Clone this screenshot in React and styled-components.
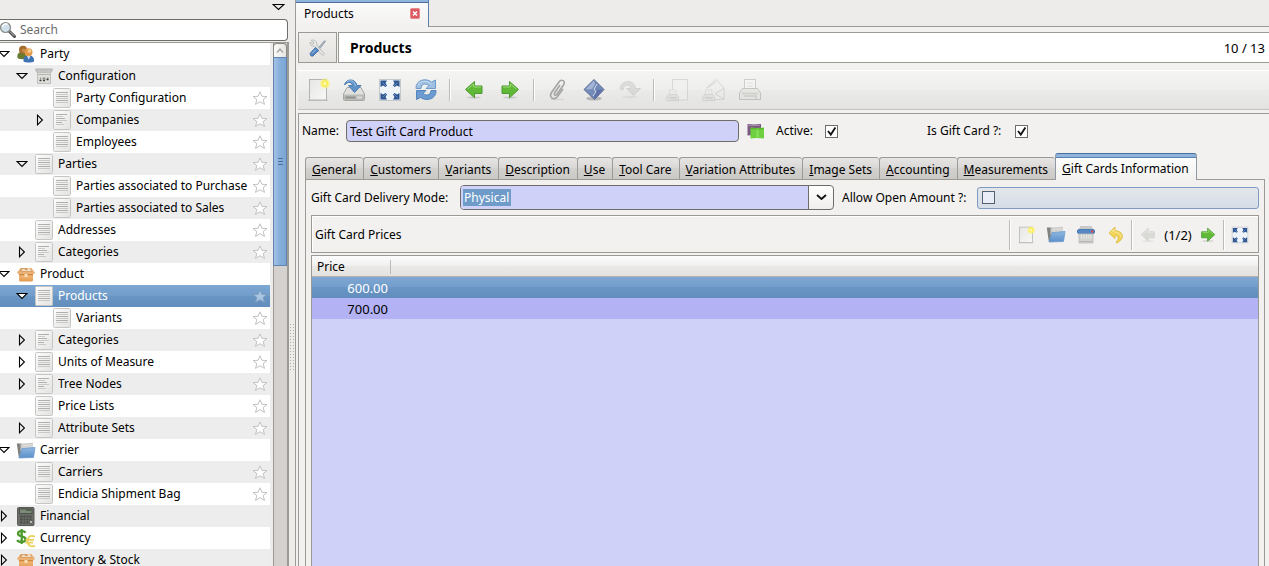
import React, { useId } from "react";
import styled, { createGlobalStyle, css } from "styled-components";

const Global = createGlobalStyle`
  *, *::before, *::after { box-sizing: border-box; }
  body { margin: 0; background: #edecea; overflow: hidden; }
  body, button, input, select, table {
    font-family: "Noto Sans", "Open Sans", sans-serif;
    font-size: 12px;
    line-height: 16px;
    color: #000;
  }
  button { border: 0; padding: 0; background: none; }
  svg { display: block; flex: none; }
`;

const selectedFill = "linear-gradient(#7fa7d3 0%, #719dca 50%, #6996c5 50%, #628dbc 100%)";

/* ---------- layout ---------- */
const Window = styled.div`
  display: flex;
  height: 100vh;
  overflow: hidden;
`;
const Sidebar = styled.aside`
  flex: none;
  width: 289px;
  display: flex;
  flex-direction: column;
`;
const SidebarHead = styled.header`
  height: 19px;
  padding: 3px 4px 0 0;
  display: flex;
  align-items: flex-start;
  justify-content: flex-end;
`;
const SearchBox = styled.label`
  display: flex;
  align-items: center;
  gap: 1px;
  height: 22px;
  margin-right: 1px;
  border: 1px solid #6f6d69;
  border-left: 0;
  border-radius: 0 4px 4px 0;
  background: #fff;
  input {
    flex: 1;
    min-width: 0;
    border: 0;
    padding: 0 2px;
    background: transparent;
    outline: 0;
  }
  input::placeholder { color: #6b6b6b; opacity: 1; }
`;
const TreeArea = styled.div`
  flex: 1;
  min-height: 0;
  margin-top: 1px;
  border-top: 1px solid #9c9a95;
  border-right: 2px solid #9c9a95;
  display: flex;
`;
const Tree = styled.ul`
  flex: 1;
  min-width: 0;
  margin: 0;
  padding: 0;
  list-style: none;
  overflow: hidden;
`;
const TreeRow = styled.li`
  display: flex;
  align-items: center;
  height: 22px;
  padding-left: ${(p) => p.$level * 18}px;
  background: ${(p) => (p.$selected ? selectedFill : p.$even ? "#ededed" : "#fff")};
  color: ${(p) => (p.$selected ? "#fff" : "#000")};
`;
const Expander = styled.button`
  width: 16px;
  height: 22px;
  display: flex;
  align-items: center;
  ${(p) => p.$open && css`
    margin-left: -2px;
    padding-right: 2px;
    width: 18px;
  `}
`;
const TreeIcon = styled.span`
  width: 20px;
  display: flex;
  justify-content: center;
  margin-right: 4px;
`;
const TreeLabel = styled.span`
  flex: 1;
  min-width: 0;
  overflow: hidden;
  white-space: nowrap;
`;
const StarButton = styled.button`
  flex: none;
  width: 21px;
  display: flex;
  justify-content: center;
`;
const ScrollTrack = styled.div`
  width: 17px;
  padding-left: 3px;
  background: linear-gradient(90deg, #edecea 3px, #9c9a95 3px, #9c9a95 4px, #d5d1cf 4px);
`;
const ScrollUp = styled.button`
  width: 14px;
  height: 14px;
  display: grid;
  place-items: center;
  border: 1px solid #8b8984;
  border-bottom: 0;
  border-radius: 4px 4px 0 0;
  background: linear-gradient(90deg, #fbfbfa, #e6e5e3);
`;
const ScrollThumb = styled.div`
  width: 14px;
  height: 209px;
  display: grid;
  place-items: center;
  border: 1px solid #5f84b0;
  background: linear-gradient(90deg, #a3c2e3, #86aedb 50%, #7ba6d4);
`;
const Splitter = styled.div`
  flex: none;
  width: 6px;
  display: flex;
  align-items: center;
  justify-content: center;
  padding-top: 128px;
`;
const Main = styled.main`
  flex: 1;
  min-width: 0;
  display: flex;
  flex-direction: column;
`;
const WindowTabs = styled.nav`
  display: flex;
  height: 27px;
  &::after { content: ""; flex: 1; border-bottom: 1px solid #9c9a95; }
`;
const WindowTab = styled.div`
  width: 134px;
  display: flex;
  align-items: center;
  justify-content: space-between;
  padding: 0 8px;
  border: 1px solid #9c9a95;
  border-right-color: #5b7fa8;
  border-width: 0 1px;
  background: linear-gradient(#8fb4dd 2px, #4b6f9b 2px, #4b6f9b 3px, #fbfbfb 3px, #f2f1ef);
`;
const Page = styled.section`
  flex: 1;
  min-height: 0;
  display: flex;
  flex-direction: column;
  padding: 5px 0 0 2px;
  border-left: 1px solid #9c9a95;
  background: #f2f1ef;
`;
const TitleRow = styled.div`
  display: flex;
  gap: 1px;
  height: 31px;
`;
const ToolsButton = styled.button`
  width: 39px;
  display: grid;
  place-items: center;
  border: 1px solid #9c9a95;
  background: linear-gradient(#f0efed, #e4e3e0);
`;
const TitleBar = styled.header`
  flex: 1;
  display: flex;
  align-items: center;
  justify-content: space-between;
  padding: 1px 4px 0 11px;
  border: 1px solid #9c9a95;
  border-right: 0;
  background: #fff;
`;
const Title = styled.h1`
  margin: 0;
  font-size: 14px;
  line-height: 18px;
  font-weight: 700;
`;
const Position = styled.span`
  font-size: 13px;
`;
const Toolbar = styled.div`
  display: flex;
  align-items: center;
  height: 40px;
  margin: 7px 0 3px;
  padding-left: 2px;
  border-top: 1px solid #fff;
  border-bottom: 1px solid #c3c1bd;
  background: linear-gradient(#f4f4f3, #eeeeec 50%, #ebebe9 50%, #e3e2e0);
`;
const ToolButton = styled.button`
  width: ${(p) => (p.$small ? 30 : 36)}px;
  height: 30px;
  display: grid;
  place-items: center;
  opacity: ${(p) => (p.disabled ? 0.4 : 1)};
`;
const ToolSeparator = styled.span`
  width: 12px;
  height: 22px;
  background: linear-gradient(90deg, transparent 5px, #bdbbb7 5px, #bdbbb7 6px, #fff 6px, #fff 7px, transparent 7px);
`;
const FormFrame = styled.form`
  flex: 1;
  min-height: 0;
  display: flex;
  flex-direction: column;
  padding: 6px 4px 0 3px;
  border: 1px solid #9c9a95;
  border-width: 1px 0 0 1px;
`;
const NameRow = styled.div`
  display: flex;
  align-items: center;
  height: 22px;
`;
const Label = styled.label`
  flex: none;
  width: ${(p) => p.$width}px;
  white-space: nowrap;
`;
const TextInput = styled.input`
  flex: 1;
  min-width: 0;
  height: 22px;
  padding: 0 3px;
  border: 1px solid #6f6d69;
  border-radius: 4px;
  background: #d0d1f9;
  outline: 0;
`;
const RelationButton = styled.button`
  width: 37px;
  padding-left: 8px;
`;
const Check = styled.input`
  appearance: none;
  flex: none;
  width: 13px;
  height: 13px;
  margin: 0;
  border: 1px solid #6f6d69;
  background: ${(p) => (p.$tinted ? "#e9eef6" : "#fff")};
  ${(p) => p.$tinted && css`border-color: #55616f;`}
  &:checked {
    background: #fff url("data:image/svg+xml,%3Csvg xmlns='http://www.w3.org/2000/svg' viewBox='0 0 11 11'%3E%3Cpath d='M2 5l2.8 3.6L9.4 1.6' fill='none' stroke='%23111' stroke-width='1.8'/%3E%3C/svg%3E") center / 11px 11px no-repeat;
  }
`;
const FlagCell = styled.div`
  flex: none;
  width: ${(p) => p.$width}px;
  display: flex;
  align-items: center;
`;
const TabStrip = styled.div`
  display: flex;
  align-items: flex-end;
  height: 27px;
  margin: 11px 0 0 3px;
  &::after {
    content: "";
    flex: 1;
    border-bottom: 1px solid #9c9a95;
  }
`;
const Tab = styled.button`
  flex: none;
  height: ${(p) => (p.$active ? 27 : 23)}px;
  padding: ${(p) => (p.$active ? "3px 7px 0 6px" : "2px 7px 0 6px")};
  border: 1px solid #9c9a95;
  border-right-width: ${(p) => (p.$active ? 1 : 0)}px;
  border-radius: 3px 3px 0 0;
  white-space: nowrap;
  background: linear-gradient(#e6e5e3, #d9d7d5 50%, #d3d1ce 50%, #cbc9c6);
  ${(p) =>
    p.$active &&
    css`
      border-color: #4b6f9b #8f99a5 transparent;
      border-bottom: 0;
      background: linear-gradient(#8fb4dd 3px, #5a80ac 3px, #5a80ac 4px, #fdfdfd 4px, #f2f1ef);
    `}
`;
const TabPanel = styled.section`
  flex: 1;
  min-height: 0;
  display: flex;
  flex-direction: column;
  gap: 2px;
  margin-left: 3px;
  padding: 5px 5px 0 5px;
  border: 1px solid #9c9a95;
  border-width: 0 1px;
  background: #f2f1ef;
`;
const DeliveryRow = styled.div`
  display: grid;
  grid-template-columns: 149px 374fr 143px 282fr;
  align-items: center;
  height: 25px;
  margin-bottom: 3px;
  > label:nth-of-type(2) { padding-left: 8px; }
`;
const Combo = styled.div`
  display: flex;
  height: 25px;
  border: 1px solid #6f6d69;
  border-radius: 4px;
  overflow: hidden;
  background: linear-gradient(#fff, #efeeec);
`;
const ComboSelect = styled.select`
  appearance: none;
  flex: 1;
  min-width: 0;
  padding: 0 3px;
  border: 0;
  border-right: 1px solid #6f6d69;
  border-radius: 0;
  outline: 0;
  color: #fff;
  background: #d0d1f9 linear-gradient(#6f9bc9, #6f9bc9) 2px center / 48px 17px no-repeat;
  option { color: #000; }
`;
const ComboArrow = styled.span`
  width: 24px;
  display: grid;
  place-items: center;
`;
const CheckField = styled.div`
  display: flex;
  align-items: center;
  height: 22px;
  padding-left: 4px;
  border: 1px solid #7d9cc0;
  border-radius: 3px;
  background: linear-gradient(#e3e7ea, #d5dde7);
`;
const ListBar = styled.div`
  display: flex;
  align-items: center;
  height: 38px;
  padding: 1px 3px 0;
  border: 1px solid #9c9a95;
  box-shadow: inset 1px 1px #fff;
`;
const ListTitle = styled.h2`
  flex: 1;
  margin: 0;
  font-size: 12px;
  font-weight: 400;
`;
const Divider = styled.span`
  width: 2px;
  height: 30px;
  border-left: 1px solid #bdbbb7;
  border-right: 1px solid #fff;
`;
const Counter = styled.output`
  width: 30px;
  font-size: 13px;
  text-align: center;
`;
const ListFrame = styled.div`
  flex: 1;
  min-height: 0;
  border: 1px solid #9c9a95;
  border-bottom: 0;
  background: #d0d1f9;
`;
const PriceTable = styled.table`
  width: 100%;
  border-collapse: collapse;
  table-layout: fixed;
  th, td { padding: 0 3px 0 5px; height: 21px; font-weight: 400; text-align: left; }
  th:first-child {
    width: 79px;
    background: linear-gradient(#bdbbb7, #bdbbb7) right center / 1px 14px no-repeat;
  }
  thead tr { background: linear-gradient(#fcfcfc, #f0efee 50%, #e9e8e6 50%, #e4e3e0 95%, #b5b3ae 96%); }
  td { font-size: 13px; }
  td:first-child { text-align: right; }
`;
const PriceRow = styled.tr`
  background: ${(p) => (p.$selected ? selectedFill : "#b2b2f5")};
  color: ${(p) => (p.$selected ? "#fff" : "#000")};
`;

/* ---------- icons ---------- */
const DownTri = ({ w = 10, light }) => (
  <svg width={w + 2} height="8" viewBox={`0 0 ${w + 2} 8`}>
    <path d={`M1 1.500H${w + 1}L${w / 2 + 1} 6.500Z`} fill={light ? "#fff" : "none"} stroke="#000" strokeWidth="1.100" />
  </svg>
);
const RightTri = () => (
  <svg width="8" height="12" viewBox="0 0 8 12">
    <path d="M1.500 1.200V10.800L6.400 6Z" fill="none" stroke="#000" strokeWidth="1.100" />
  </svg>
);
const SearchIcon = () => (
  <svg width="17" height="18" viewBox="0 0 17 18">
    <path d="M9 10L14.500 15.500" stroke="#4a4a48" strokeWidth="3" strokeLinecap="round" />
    <path d="M10 10.600L14 14.600" stroke="#c9c9c7" strokeWidth="1" strokeLinecap="round" />
    <circle cx="5.500" cy="6.500" r="5" fill="#cfdfec" stroke="#888a85" strokeWidth="1.200" />
    <path d="M2.500 6a3.300 3.300 0 0 1 5-2.500" stroke="#fff" strokeWidth="1.500" fill="none" />
  </svg>
);
const ListIcon = ({ ragged }) => {
  const gid = useId();
  const widths = ragged ? [11, 7, 9, 11, 6, 8] : [12, 12, 12, 12, 12, 12];
  return (
    <svg width="18" height="20" viewBox="0 0 18 20">
      <linearGradient id={gid} x2="1" y2="1">
        <stop stopColor="#fdfdfd" />
        <stop offset="1" stopColor="#e2e3e0" />
      </linearGradient>
      <rect x="0.500" y="0.500" width="17" height="19" rx="1" fill={`url(#${gid})`} stroke="#c6c7c4" />
      {widths.map((w, i) => (
        <path key={i} d={`M3 ${4.5 + i * 2}h${w}`} stroke={i % 2 ? "#c9cac7" : "#b0b1ae"} />
      ))}
    </svg>
  );
};
const ConfigIcon = () => (
  <svg width="18" height="16" viewBox="0 0 18 16">
    <path d="M.5 1L2 4.500H16L17.500 1Z" fill="#c4c5c2" stroke="#b2b3b0" />
    <path d="M2.500 4.500H15.500V15.500H2.500Z" fill="#dededb" stroke="#bfc0bd" />
    <path d="M3 6.500h12" stroke="#b5b6b3" />
    <path d="M5 10.500h1M7.500 10.500h3M12 10.500h1.500" stroke="#8d8f8b" strokeWidth="2" />
    <path d="M4.500 12.500h2M8 12.500h2M11.500 11.500h2" stroke="#3e403d" strokeWidth="1.600" />
  </svg>
);
const PartyIcon = () => (
  <svg width="18" height="18" viewBox="0 0 18 18">
    <path d="M.5 13c-.8-5 2-6 4.500-6s5 1 4.500 6c-2 1.600-7 1.600-9 0z" fill="#6a7b2f" />
    <circle cx="6" cy="4.700" r="4" fill="#a5692c" />
    <circle cx="6.500" cy="5.500" r="2" fill="#c08a4a" />
    <path d="M6.500 16.500c-.6-5 2-6 5-6s6 1 5.500 6c-2.500 1.300-8 1.300-10.500 0z" fill="#3d72b4" />
    <path d="M10 10.800l1.700 4 1.700-4z" fill="#dce8f5" />
    <circle cx="11.500" cy="7.300" r="4" fill="#e29a4b" />
    <circle cx="12.500" cy="6" r="1.800" fill="#f6cf98" />
  </svg>
);
const BoxIcon = () => {
  const gid = useId();
  return (
    <svg width="20" height="15" viewBox="0 0 20 15">
      <linearGradient id={gid} x2="0" y2="1">
        <stop stopColor="#d98f42" />
        <stop offset=".5" stopColor="#eeb270" />
        <stop offset="1" stopColor="#e09a4e" />
      </linearGradient>
      <path d="M3 5H17V13Q17 14.500 15.500 14.500H4.500Q3 14.500 3 13Z" fill={`url(#${gid})`} />
      <path d="M4.500 1H15.500L19 5.500L18 7H2L1 5.500Z" fill="#eab277" />
      <path d="M5 1.500H15L16 4.500H4Z" fill="#c99058" />
      <path d="M5 4q2-3.500 4-1.500t3-1.200T15.500 4Z" fill="#f2dcc0" />
      <path d="M3 7.500h14" stroke="#c77f35" strokeWidth=".8" />
      <path d="M8.500 7h3v3h-3z" fill="#f8dfb9" />
    </svg>
  );
};
const FolderIcon = () => {
  const gid = useId();
  return (
    <svg width="20" height="17" viewBox="0 0 20 17">
      <linearGradient id={gid} x2="0" y2="1">
        <stop stopColor="#8fb8e2" />
        <stop offset="1" stopColor="#5a8fc9" />
      </linearGradient>
      <path d="M.8 1.500H5.500L7 3V15.500H2.800Z" fill="#80827e" />
      <path d="M4.500 1.800L17 .8V9H4.500Z" fill="#c9cac7" />
      <path d="M6.500 3.500L17 2.700M6.500 5.300L17 4.800" stroke="#e6e7e4" />
      <path d="M6 6.500L19 5.500L17.500 15.500L3 16Z" fill={`url(#${gid})`} stroke="#6d9bce" strokeWidth=".8" />
    </svg>
  );
};
const CalculatorIcon = () => (
  <svg width="18" height="19" viewBox="0 0 18 19">
    <rect x=".5" y=".5" width="16.500" height="18" rx="1" fill="#6b6d69" stroke="#5a5c58" />
    <rect x="2.500" y="2" width="12.500" height="4.500" fill="#7c8c78" stroke="#454743" strokeWidth=".8" />
    <path d="M9 3.200h5" stroke="#3c4a3a" />
    {[9.5, 12.5, 15.5].map((y) => (
      <path key={y} d={`M3 ${y}h2.500m1 0h2m1 0h2m1 0h2`} stroke="#4a4c48" strokeWidth="1.800" />
    ))}
    <path d="M13 15h2" stroke="#b9bbb6" strokeWidth="2" />
  </svg>
);
const CurrencyIcon = () => (
  <svg width="20" height="20" viewBox="0 0 20 20">
    <path d="M9.500 4.800C8.500 2.800 2 2.300 2 5.700C2 9 9.500 7.300 9.500 11.300C9.500 15 2.500 14.600 1.200 12M5.700 1V16" stroke="#4e9a2e" strokeWidth="2.300" fill="none" />
    <path d="M19 8.700C14.500 6.500 11.500 9 11.500 13C11.500 17.500 15 19.600 19 17.600M9.500 11.800H18M9.500 14.600H17" stroke="#ecd05c" strokeWidth="1.800" fill="none" />
  </svg>
);
const Star = ({ filled }) => (
  <svg width="16" height="15" viewBox="0 0 16 15">
    <path
      d="M8 .8L9.900 5.300L15 5.500L11.100 8.600L12.500 13.400L8 10.700L3.500 13.400L4.900 8.600L1 5.500L6.100 5.300Z"
      fill={filled ? "#a9c6e4" : "#fff"}
      stroke={filled ? "#7f9dbd" : "#c2c2c2"}
    />
  </svg>
);
const CloseIcon = () => (
  <svg width="10" height="11" viewBox="0 0 10 11">
    <rect x=".5" y=".5" width="9" height="10" rx="1" fill="#dd5a62" stroke="#e58a8f" />
    <path d="M3 3.500l4 4M7 3.500l-4 4" stroke="#fff" strokeWidth="1.500" />
  </svg>
);
const ToolsIcon = () => (
  <svg width="20" height="20" viewBox="0 0 20 20">
    <path d="M3.200 2.200L6 5L5 6.200L2.200 4C1.500 7 4 8.500 6 8L13.500 16.500Q15.500 18 16.500 16L8.800 7.200C9.500 3.800 6.500 1.300 3.200 2.200Z" fill="#e7e8e5" stroke="#bbbdb9" />
    <path d="M10.500 9.500L16.500 2.800L17.500 3.300L11.800 10.600" fill="#b5bdc6" stroke="#8f9dab" />
    <path d="M2 15.500L7.500 9.500L10.700 12.300L5 18Q2.500 19 2 15.500Z" fill="#5385c2" stroke="#4473ab" />
    <path d="M4 15.500l4-4" stroke="#a5c4e7" />
  </svg>
);
const NewIcon = ({ size = 24 }) => {
  const gid = useId();
  return (
    <svg width={size} height={size} viewBox="0 0 24 24">
      <linearGradient id={gid} x2="1" y2="1">
        <stop stopColor="#e6e6e4" />
        <stop offset="1" stopColor="#f8f8f7" />
      </linearGradient>
      <path d="M2 22.500h20" stroke="#c4c3c0" />
      <rect x="3.500" y="1.500" width="17" height="20.500" fill={`url(#${gid})`} stroke="#b3b4b0" />
      <circle cx="19" cy="5.500" r="5" fill="#fcf36a" opacity=".6" />
      <circle cx="19" cy="5.500" r="3.200" fill="#fbee55" />
      <circle cx="19" cy="5.500" r="1.500" fill="#fffcc0" />
    </svg>
  );
};
const SaveIcon = () => (
  <svg width="24" height="24" viewBox="0 0 24 24">
    <path d="M5 9.500H19L22.500 16V21.500Q22.500 22.500 21.500 22.500H2.500Q1.500 22.500 1.500 21.500V16Z" fill="#e0e1de" stroke="#a6a8a3" />
    <path d="M2 16.500H22V22H2Z" fill="#b9bbb7" />
    <path d="M3.500 19.500h10" stroke="#90928e" strokeWidth="2" />
    <path d="M15 19.500h5" stroke="#dcdddA" strokeWidth="2" />
    <path d="M2.500 7C3.500 1 13 -.5 15 7.500H19L12.500 14.500L6.500 7.500H10.500C9.500 3.500 5.500 3.500 2.500 7Z" fill="#5f92c7" stroke="#4b7bb0" />
    <path d="M5 4C8 1.500 12.500 2.500 13.500 8" stroke="#a5c8e8" fill="none" />
  </svg>
);
const FullscreenIcon = ({ size = 24 }) => (
  <svg width={size} height={size} viewBox="0 0 24 24">
    <rect x="1.500" y="1.500" width="21" height="21" fill="#eef3f7" stroke="#c3c8cb" />
    <path d="M2.500 2.500H9L7.500 5L9 7.500L7.500 9L5 7.500L2.500 9ZM21.500 2.500H15L16.500 5L15 7.500L16.500 9L19 7.500L21.500 9ZM2.500 21.500H9L7.500 19L9 16.500L7.500 15L5 16.500L2.500 15ZM21.500 21.500H15L16.500 19L15 16.500L16.500 15L19 16.500L21.500 15Z" fill="#2c5592" />
    <path d="M4.500 4.500l3.500 3.500M19.500 4.500l-3.500 3.500M4.500 19.500l3.500-3.500M19.500 19.500l-3.500-3.500" stroke="#6c8fbe" />
  </svg>
);
const RefreshIcon = () => (
  <svg width="24" height="24" viewBox="0 0 24 24">
    <path d="M2 10.500C1.500 2 12 -.5 17.500 4L21.500 2V10.500H12L15 7.500C11 4.500 7 6.500 7 10.500Z" fill="#9dbfe2" stroke="#6f9bca" />
    <path d="M22 12.500C22.500 21.500 12 23.500 6.500 19.500L2.500 21.500V12.500H12L9 15.500C13 18.500 16.500 17 17 12.500Z" fill="#6b9bd0" stroke="#5486bd" />
    <path d="M4 7.500C5.500 2.500 13 2 17.500 6" stroke="#cfe1f3" fill="none" />
  </svg>
);
const Arrow = ({ size = 20, right, gray }) => (
  <svg width={size} height={size} viewBox="0 0 20 20">
    <ellipse cx="10" cy="17.500" rx="7" ry="1.200" fill="#000" opacity=".12" />
    <g transform={right ? "translate(20 0) scale(-1 1)" : undefined}>
      <path d="M1.500 9.500L10.500 1.500V6H18V13.500H10.500V17.800Z" fill={gray ? "#b5b6b2" : "#5fb836"} stroke={gray ? "#a9aaa7" : "#4d9a35"} />
      <path d="M3.500 9.300L9.700 3.800V7H17" stroke={gray ? "#d5d6d3" : "#9bdc72"} fill="none" />
    </g>
  </svg>
);
const ClipIcon = () => (
  <svg width="24" height="24" viewBox="0 0 24 24">
    <path d="M5 21.500h13" stroke="#d8d7d4" strokeWidth="1.500" />
    <path d="M14 7L8.500 15C7.500 17 9.500 18 10.700 16.500L17.500 7C20 3 15.500 .5 13 4L5.500 14.500C2.500 19.500 8 23 11.500 18.500L17 11" stroke="#a3a5a1" strokeWidth="1.600" fill="none" />
  </svg>
);
const DiamondIcon = () => (
  <svg width="24" height="24" viewBox="0 0 24 24">
    <ellipse cx="12" cy="20.500" rx="8" ry="2" fill="#000" opacity=".2" />
    <path d="M12 1.500L22 11.500L12.500 21.500L2 11.500Z" fill="#748bb8" stroke="#5a6c98" />
    <path d="M12 2.500L3.500 11.500L10 11L13 6Z" fill="#a5b5d6" />
    <path d="M12.500 21L21 11.500L15 12L12 16Z" fill="#5a70a6" />
    <path d="M15 6l-3 5 2 3-3 4" stroke="#d4dcee" fill="none" />
  </svg>
);
const RedoIcon = () => (
  <svg width="24" height="24" viewBox="0 0 24 24">
    <ellipse cx="12" cy="19" rx="8" ry="1.200" fill="#000" opacity=".12" />
    <path d="M2 11C3 1.500 16.500 1 17.500 10.500H22.500L15.500 17.500L8.500 10.500H13C12 6 6 5.500 5 12Z" fill="#c0c1be" stroke="#a9aaa7" />
  </svg>
);
const UndoIcon = () => (
  <svg width="18" height="18" viewBox="0 0 18 18">
    <path d="M8 1L2 7L8 12.500V9.500C11.500 9.500 12.500 12 9.500 15.500V17C17.500 14 17.500 5 8 4.800Z" fill="#f2d558" stroke="#e0bf48" />
    <path d="M3.500 7l3.500-3.500V6C11 6 14 8 14 11" stroke="#faeaa0" fill="none" />
  </svg>
);
const PrinterIcon = ({ kind }) => (
  <svg width="24" height="24" viewBox="0 0 24 24">
    {kind === "page" && <path d="M6.500 1.500H21.500V22H6.500Z" fill="#f2f2f0" stroke="#b5b6b3" />}
    {kind === "mail" && <path d="M4.500 10L14 1.500L22 10V21.500H9M5 10L14 4M22 10L13 16L22 21" fill="#eeeeec" stroke="#b0b1ae" />}
    <g transform={kind ? "translate(0 11) scale(.56 .54)" : undefined}>
      <path d="M6.500 1.500H17.500V11.500H6.500Z" fill="#fafafa" stroke="#9a9b98" />
      <path d="M4.500 10.500H19.500L22.500 15V21.500H1.500V15Z" fill="#deded9" stroke="#888a85" />
      <path d="M4 15.500H20M6 18H18V21" stroke="#a2a39f" fill="none" strokeWidth="1.500" />
      <path d="M9 5h6M9 8h6" stroke="#c5c6c3" />
    </g>
  </svg>
);
const CabinetIcon = () => (
  <svg width="18" height="19" viewBox="0 0 18 19">
    <path d="M3.500 1H14.500L16.500 5H1.500Z" fill="#c9cac7" />
    <rect x=".5" y="4.500" width="17" height="4" rx="1.500" fill="#5688c3" stroke="#4a7ab3" />
    <circle cx="15.200" cy="6.500" r="1.200" fill="#e0484e" />
    <path d="M2 9H16V18H2Z" fill="#d3d4d1" stroke="#c0c1be" />
    <path d="M4.500 9.500v4m2.500-4v4m2.500-4v4m2.500-4v4m2-4v4" stroke="#e8e9e6" />
    <path d="M2.500 16.500h13" stroke="#b4b5b2" />
  </svg>
);
const RelationIcon = () => (
  <svg width="18" height="17" viewBox="0 0 18 17">
    <path d="M.5 1L7 1.500L14 1V12.500L7 12L.5 12.500Z" fill="#7a5a80" />
    <path d="M1 2.500h12" stroke="#a386a8" />
    <path d="M3.500 4.500L10 5L17 4.500V15.500L10 15L3.500 15.500Z" fill="#6fd040" />
    <path d="M4 5.500Q11 7 16.500 5.500" stroke="#4fae28" fill="none" />
    <path d="M10.500 6.500V14.500" stroke="#8ae05e" strokeWidth="2" />
  </svg>
);

/* ---------- data ---------- */
const treeIcons = {
  party: <PartyIcon />,
  config: <ConfigIcon />,
  list: <ListIcon />,
  tree: <ListIcon ragged />,
  box: <BoxIcon />,
  folder: <FolderIcon />,
  calc: <CalculatorIcon />,
  money: <CurrencyIcon />,
};
const rows = [
  [0, "open", "party", "Party"],
  [1, "open", "config", "Configuration"],
  [2, "", "list", "Party Configuration", 1],
  [2, "closed", "tree", "Companies", 1],
  [2, "", "list", "Employees", 1],
  [1, "open", "list", "Parties", 1],
  [2, "", "list", "Parties associated to Purchase", 1],
  [2, "", "list", "Parties associated to Sales", 1],
  [1, "", "list", "Addresses", 1],
  [1, "closed", "tree", "Categories", 1],
  [0, "open", "box", "Product"],
  [1, "open", "list", "Products", 1],
  [2, "", "list", "Variants", 1],
  [1, "closed", "tree", "Categories", 1],
  [1, "closed", "list", "Units of Measure", 1],
  [1, "closed", "tree", "Tree Nodes", 1],
  [1, "", "list", "Price Lists", 1],
  [1, "closed", "list", "Attribute Sets", 1],
  [0, "open", "folder", "Carrier"],
  [1, "", "list", "Carriers", 1],
  [1, "", "list", "Endicia Shipment Bag", 1],
  [0, "closed", "calc", "Financial"],
  [0, "closed", "money", "Currency"],
  [0, "closed", "box", "Inventory & Stock"],
];
const selectedRow = 11;
const tabs = [
  "General", "Customers", "Variants", "Description", "Use", "Tool Care",
  "Variation Attributes", "Image Sets", "Accounting", "Measurements", "Gift Cards Information",
];

function TreeItem({ row, index }) {
  const [level, state, icon, text, star] = row;
  const selected = index === selectedRow;
  return (
    <TreeRow $level={level} $even={index % 2 === 1} $selected={selected}>
      <Expander
        type="button"
        $open={state === "open"}
        aria-label={state ? `Toggle ${text}` : undefined}
        disabled={!state}
      >
        {state === "open" && <DownTri light={selected} />}
        {state === "closed" && <RightTri />}
      </Expander>
      <TreeIcon>{treeIcons[icon]}</TreeIcon>
      <TreeLabel>{text}</TreeLabel>
      {star && (
        <StarButton type="button" aria-label={`Favourite ${text}`}>
          <Star filled={selected} />
        </StarButton>
      )}
    </TreeRow>
  );
}

export default function App() {
  return (
    <Window>
      <Global />
      <Sidebar>
        <SidebarHead>
          <button type="button" aria-label="Menu"><DownTri w={11} /></button>
        </SidebarHead>
        <SearchBox>
          <SearchIcon />
          <input type="search" placeholder="Search" aria-label="Search" />
        </SearchBox>
        <TreeArea>
          <Tree>
            {rows.map((row, i) => <TreeItem key={i} row={row} index={i} />)}
          </Tree>
          <ScrollTrack>
            <ScrollUp type="button" aria-label="Scroll up">
              <svg width="8" height="5" viewBox="0 0 8 5"><path d="M1 4.500L4 1L7 4.500" fill="none" stroke="#a3a19d" strokeWidth="1.300" /></svg>
            </ScrollUp>
            <ScrollThumb>
              <svg width="5" height="7" viewBox="0 0 5 7"><path d="M0 .5h5M0 3.500h5M0 6.500h5" stroke="#4b6f9b" /></svg>
            </ScrollThumb>
          </ScrollTrack>
        </TreeArea>
      </Sidebar>
      <Splitter>
        <svg width="5" height="47" viewBox="0 0 5 47">
          <path d="M.5 0V47M3.500 0V47" stroke="#b0aeaa" strokeDasharray="1 2" />
        </svg>
      </Splitter>
      <Main>
        <WindowTabs>
          <WindowTab>
            Products
            <button type="button" aria-label="Close tab"><CloseIcon /></button>
          </WindowTab>
        </WindowTabs>
        <Page>
          <TitleRow>
            <ToolsButton type="button" aria-label="Tools"><ToolsIcon /></ToolsButton>
            <TitleBar>
              <Title>Products</Title>
              <Position>10 / 13</Position>
            </TitleBar>
          </TitleRow>
          <Toolbar role="toolbar">
            <ToolButton aria-label="New"><NewIcon /></ToolButton>
            <ToolButton aria-label="Save"><SaveIcon /></ToolButton>
            <ToolButton aria-label="Switch view"><FullscreenIcon /></ToolButton>
            <ToolButton aria-label="Reload"><RefreshIcon /></ToolButton>
            <ToolSeparator />
            <ToolButton aria-label="Previous"><Arrow /></ToolButton>
            <ToolButton aria-label="Next"><Arrow right /></ToolButton>
            <ToolSeparator />
            <ToolButton aria-label="Attachment"><ClipIcon /></ToolButton>
            <ToolButton aria-label="Action"><DiamondIcon /></ToolButton>
            <ToolButton aria-label="Relate" disabled><RedoIcon /></ToolButton>
            <ToolSeparator />
            <ToolButton aria-label="Report" disabled><PrinterIcon kind="page" /></ToolButton>
            <ToolButton aria-label="E-mail" disabled><PrinterIcon kind="mail" /></ToolButton>
            <ToolButton aria-label="Print" disabled><PrinterIcon /></ToolButton>
          </Toolbar>
          <FormFrame>
            <NameRow>
              <Label htmlFor="name" $width={44}>Name:</Label>
              <TextInput id="name" defaultValue="Test Gift Card Product" />
              <RelationButton type="button" aria-label="Translate"><RelationIcon /></RelationButton>
              <FlagCell $width={151}>
                <Label htmlFor="active" $width={49}>Active:</Label>
                <Check id="active" type="checkbox" defaultChecked />
              </FlagCell>
              <FlagCell $width={338}>
                <Label htmlFor="gift" $width={88}>Is Gift Card ?:</Label>
                <Check id="gift" type="checkbox" defaultChecked />
              </FlagCell>
            </NameRow>
            <TabStrip role="tablist">
              {tabs.map((t, i) => (
                <Tab key={t} type="button" role="tab" aria-selected={i === 10} $active={i === 10}>
                  <u>{t[0]}</u>{t.slice(1)}
                </Tab>
              ))}
            </TabStrip>
            <TabPanel>
              <DeliveryRow>
                <label htmlFor="mode">Gift Card Delivery Mode:</label>
                <Combo>
                  <ComboSelect id="mode" defaultValue="Physical">
                    <option>Physical</option>
                    <option>Virtual</option>
                  </ComboSelect>
                  <ComboArrow>
                    <svg width="11" height="7" viewBox="0 0 11 7"><path d="M1 1L5.500 5L10 1" fill="none" stroke="#111" strokeWidth="1.800" /></svg>
                  </ComboArrow>
                </Combo>
                <label htmlFor="open">Allow Open Amount ?:</label>
                <CheckField><Check id="open" type="checkbox" $tinted /></CheckField>
              </DeliveryRow>
              <ListBar>
                <ListTitle>Gift Card Prices</ListTitle>
                <Divider />
                <ToolButton type="button" $small aria-label="New price"><NewIcon size={18} /></ToolButton>
                <ToolButton type="button" $small aria-label="Open price"><FolderIcon /></ToolButton>
                <ToolButton type="button" $small aria-label="Delete price"><CabinetIcon /></ToolButton>
                <ToolButton type="button" $small aria-label="Undelete price"><UndoIcon /></ToolButton>
                <Divider />
                <ToolButton type="button" $small disabled aria-label="Previous price"><Arrow size={16} gray /></ToolButton>
                <Counter>(1/2)</Counter>
                <ToolButton type="button" $small aria-label="Next price"><Arrow size={16} right /></ToolButton>
                <Divider />
                <ToolButton type="button" $small aria-label="Switch list view"><FullscreenIcon size={18} /></ToolButton>
              </ListBar>
              <ListFrame>
                <PriceTable>
                  <thead><tr><th scope="col">Price</th><th aria-label="Blank" /></tr></thead>
                  <tbody>
                    <PriceRow $selected><td>600.00</td><td /></PriceRow>
                    <PriceRow><td>700.00</td><td /></PriceRow>
                  </tbody>
                </PriceTable>
              </ListFrame>
            </TabPanel>
          </FormFrame>
        </Page>
      </Main>
    </Window>
  );
}
